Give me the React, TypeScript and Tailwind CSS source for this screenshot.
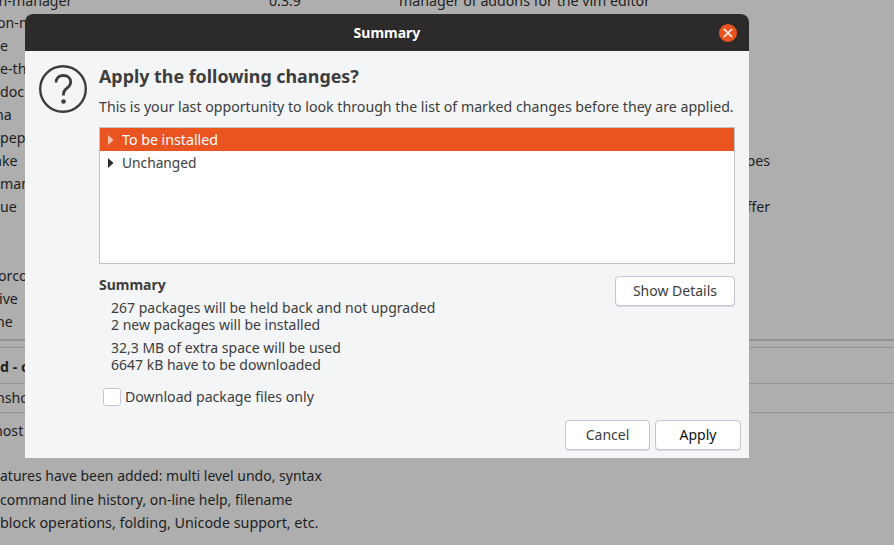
const sans = "font-['Noto_Sans','Open_Sans',sans-serif]";

// rows of the package list behind the dialog, most of each name is cut by the window edge
const listRows = [
  { name: "on-m", className: "-ml-[3px]" },
  { name: "e", className: "" },
  { name: "e-th", className: "" },
  { name: "doc", className: "" },
  { name: "na", className: "-ml-[5px]" },
  { name: "pep", className: "" },
  { name: "ake", className: "-ml-[6px]" },
  { name: "man", className: "" },
  { name: "ue", className: "" },
  { name: "", className: "" },
  { name: "", className: "" },
  { name: "orco", className: "-ml-[2px]" },
  { name: "ive", className: "-ml-[1px]" },
  { name: "ne", className: "-ml-[4px]" },
];

function Background() {
  return (
    <div className="flex flex-col h-[545px] text-[14.2px] text-[#1e1e1e]">
      <div className="h-[339px] shrink-0">
        <div className="flex h-[11px] items-end leading-[20px]">
          <span className="w-[279px] -ml-[10px] whitespace-nowrap">on-manager</span>
          <span className="w-[130px]">0.3.9</span>
          <span className="whitespace-nowrap">manager of addons for the vim editor</span>
        </div>
        <div className="flex flex-col">
          {listRows.map((row, i) => (
            <div key={i} className="h-[23px] leading-[23px] whitespace-nowrap flex justify-between">
              <span className={row.className}>{row.name}</span>
              {i === 6 && <span className="mr-[124px]">pes</span>}
              {i === 8 && <span className="mr-[124px]">ffer</span>}
            </div>
          ))}
        </div>
      </div>
      <div className="h-[9px] shrink-0 border-t-2 border-b border-[#929292]" />
      <div className="h-[36px] shrink-0 leading-[38px] font-bold whitespace-nowrap border-b border-[#929292]">d - c</div>
      <div className="h-[29px] shrink-0 leading-[28px] whitespace-nowrap border-b border-[#929292] -ml-[4px]">nsho</div>
      <div className="h-[36px] shrink-0 leading-[36px] whitespace-nowrap -ml-[6px]">host</div>
      <div className="leading-[23.5px] mt-[15px] whitespace-nowrap">
        <div className="text-[14px]">atures have been added: multi level undo, syntax</div>
        <div className="text-[14px]">command line history, on-line help, filename</div>
        <div className="text-[14.33px]">block operations, folding, Unicode support, etc.</div>
      </div>
    </div>
  );
}

function Button({ label, className }: { label: string; className: string }) {
  return (
    <button className={`h-[30px] pb-[2px] bg-white border border-[#c3c7cf] rounded-[4px] shadow-[0_1px_0_#d8dbe0] text-[14px] ${className}`}>
      {label}
    </button>
  );
}

export default function App() {
  return (
    <div className={`relative w-[894px] h-[545px] overflow-hidden bg-[#aeaeae] ${sans}`}>
      <Background />

      {/* the dialog is a window floating over the dimmed app */}
      <div className="absolute left-[25px] top-[14px] w-[724px] h-[444px] flex flex-col bg-[#f4f5f7] rounded-t-[8px] overflow-hidden text-[#3d3d3d]">
        <div className="h-[37px] shrink-0 bg-[#2c2a2b] flex items-center justify-center relative">
          <span className="text-white text-[14px] font-bold">Summary</span>
          <button className="absolute right-[12px] top-[10px] w-[18px] h-[18px] rounded-full bg-[#e95420] flex items-center justify-center">
            <svg width="10" height="10" viewBox="0 0 10 10" fill="none" stroke="white" strokeWidth="1.5">
              <path d="M1 1 9 9M9 1 1 9" />
            </svg>
          </button>
        </div>

        <div className="flex flex-1 min-h-0 pl-[14px] pr-[14px]">
          <svg className="w-[48px] h-[48px] shrink-0 mt-[14px]" viewBox="0 0 48 48" fill="none">
            <circle cx="24" cy="24" r="22.8" stroke="#3d3d3d" strokeWidth="2.4" />
            <path d="M17 17.5c0-4.4 3-7 7.3-7 4.400 0 7.400 2.800 7.400 6.600 0 3-1.700 4.600-3.700 6.100-2.300 1.700-3.500 2.900-3.500 5.600v1.700" stroke="#3d3d3d" strokeWidth="2.800" />
            <circle cx="24.500" cy="36.500" r="2.300" fill="#3d3d3d" />
          </svg>

          <div className="flex flex-col flex-1 min-w-0 ml-[12px]">
            <h1 className="mt-[13px] text-[17.85px] leading-[24px] font-bold">Apply the following changes?</h1>
            <p className="mt-[9px] text-[14.18px] leading-[20px] whitespace-nowrap">
              This is your last opportunity to look through the list of marked changes before they are applied.
            </p>

            <div className="mt-[10px] h-[137px] shrink-0 border border-[#bfc1c6] bg-white text-[14px]">
              <div className="h-[23px] bg-[#e95420] text-white flex items-center">
                <svg className="ml-[8px]" width="6" height="10" viewBox="0 0 6 10"><path d="M0 0 5.500 5 0 10Z" fill="#f6c4b0" /></svg>
                <span className="ml-[8px] text-[14.2px]">To be installed</span>
              </div>
              <div className="h-[23px] flex items-center">
                <svg className="ml-[8px]" width="6" height="10" viewBox="0 0 6 10"><path d="M0 0 5.500 5 0 10Z" fill="#2c2c2c" /></svg>
                <span className="ml-[8px] pt-[2px] text-[13.75px]">Unchanged</span>
              </div>
            </div>

            <div className="flex justify-between items-start mt-[12px]">
              <div>
                <div className="text-[14px] leading-[18px] font-bold">Summary</div>
                <div className="ml-[12px] mt-[5px] text-[14px] leading-[17px]">
                  <div>267 packages will be held back and not upgraded</div>
                  <div>2 new packages will be installed</div>
                  <div className="mt-[6px]">32,3 MB of extra space will be used</div>
                  <div>6647 kB have to be downloaded</div>
                </div>
                <label className="flex items-center mt-[15px] ml-[4px] leading-[18px]">
                  <span className="w-[18px] h-[18px] -mt-[1px] bg-white border border-[#c3c7cf] rounded-[3px]" />
                  <span className="ml-[4px] text-[14.15px]">Download package files only</span>
                </label>
              </div>
              <Button label="Show Details" className="w-[120px]" />
            </div>

            <div className="flex justify-end gap-[5px] mt-[14px] -mr-[6px]">
              <Button label="Cancel" className="w-[85px]" />
              <Button label="Apply" className="w-[86px] text-[#111]" />
            </div>
          </div>
        </div>
      </div>
    </div>
  );
}
